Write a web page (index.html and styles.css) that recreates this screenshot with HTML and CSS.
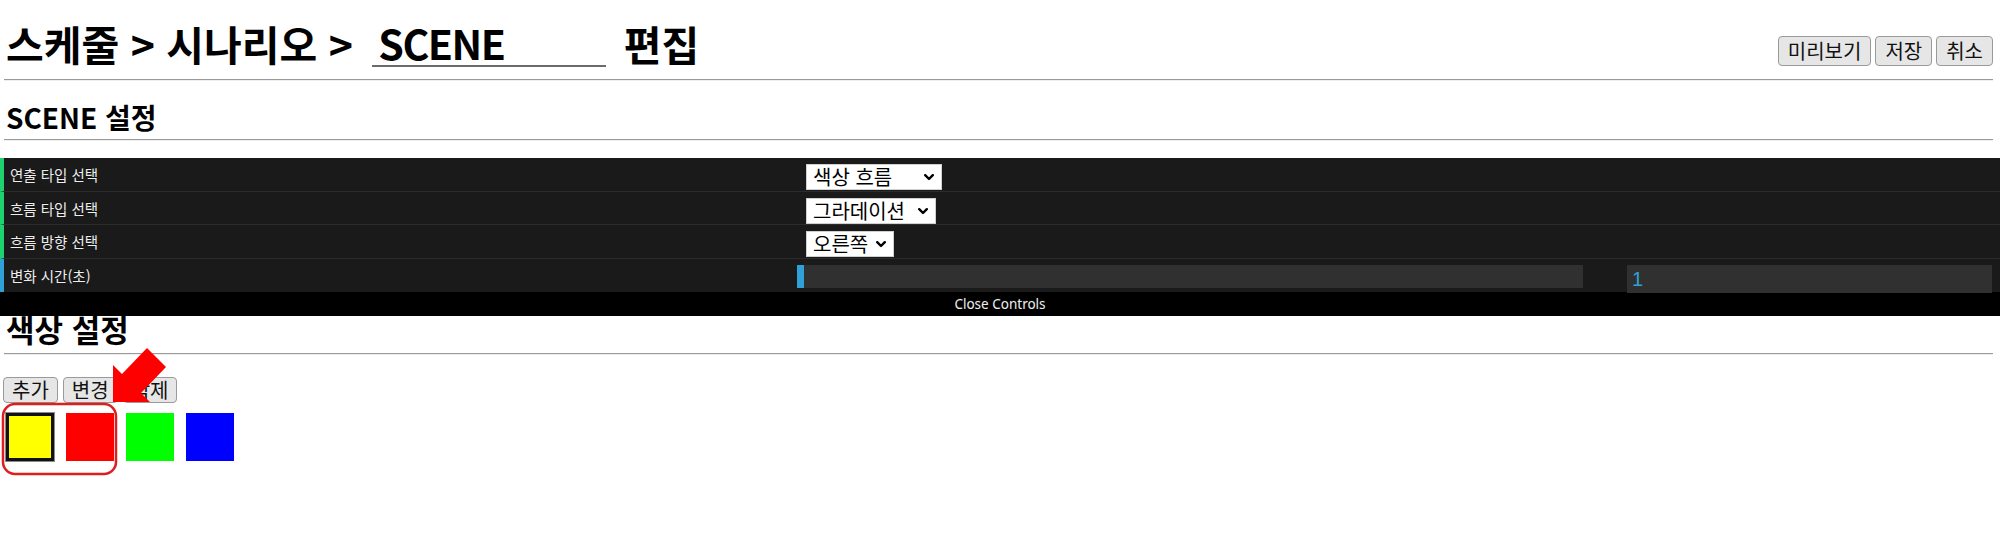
FILE: index.html
```html
<!DOCTYPE html>
<html lang="ko">
<head>
<meta charset="utf-8">
<title>SCENE 편집</title>
<link rel="stylesheet" href="styles.css">
</head>
<body>
<div class="page">
  <header class="topbar">
    <h1 class="title">스케줄 &gt; 시나리오 &gt; <input class="scene-name" type="text" value="SCENE"> 편집</h1>
    <div class="actions">
      <button class="btn">미리보기</button>
      <button class="btn">저장</button>
      <button class="btn">취소</button>
    </div>
  </header>
  <hr class="rule">
  <h2 class="sec-title">SCENE 설정</h2>
  <hr class="rule">

  <div class="gui">
    <ul class="gui-list">
      <li class="cr cr-option">
        <span class="prop">연출 타입 선택</span>
        <div class="ctl">
          <span class="sel w1">
            <select><option>색상 흐름</option><option>단색</option></select>
            <svg viewBox="0 0 10 7"><path d="M1.2 1.2 L5 5 L8.8 1.2"/></svg>
          </span>
        </div>
      </li>
      <li class="cr cr-option">
        <span class="prop">흐름 타입 선택</span>
        <div class="ctl">
          <span class="sel w2">
            <select><option>그라데이션</option><option>단계</option></select>
            <svg viewBox="0 0 10 7"><path d="M1.2 1.2 L5 5 L8.8 1.2"/></svg>
          </span>
        </div>
      </li>
      <li class="cr cr-option">
        <span class="prop">흐름 방향 선택</span>
        <div class="ctl">
          <span class="sel w3">
            <select><option>오른쪽</option><option>왼쪽</option></select>
            <svg viewBox="0 0 10 7"><path d="M1.2 1.2 L5 5 L8.8 1.2"/></svg>
          </span>
        </div>
      </li>
      <li class="cr cr-number">
        <span class="prop">변화 시간(초)</span>
        <div class="ctl">
          <div class="slider"><div class="slider-fg" style="width:7px"></div></div>
          <input class="num" type="text" value="1">
        </div>
      </li>
    </ul>
    <div class="close-btn">Close Controls</div>
  </div>

  <h2 class="sec-title2">색상 설정</h2>
  <hr class="rule">
  <div class="tools">
    <button class="btn sm">추가</button>
    <button class="btn sm">변경</button>
    <button class="btn sm">삭제</button>
  </div>
  <div class="swatches">
    <div class="swatch yellow selected"></div>
    <div class="swatch red"></div>
    <div class="swatch green"></div>
    <div class="swatch blue"></div>
  </div>
</div>

<svg class="annot" viewBox="0 0 2000 547" width="2000" height="547">
  <rect x="3" y="404" width="113" height="70" rx="12" ry="12" class="annot-box"/>
  <polygon class="annot-arrow" points="113,402 113,365 122,374 147,348 166,367 141,393 150,402"/>
</svg>
</body>
</html>
```

FILE: styles.css
```css
* { box-sizing: border-box; }

html, body {
  margin: 0;
  padding: 0;
  background: #fff;
}

body {
  position: relative;
  width: 2000px;
  height: 547px;
  overflow: hidden;
  font-family: "Noto Sans CJK KR", "Noto Sans", sans-serif;
  color: #000;
}

.page {
  padding: 0 7px 0 4px;
}

/* ---------- header ---------- */
.topbar {
  display: flex;
  justify-content: space-between;
  align-items: flex-start;
  height: 79px;
}

.title {
  margin: 0;
  padding: 19px 0 0 2px;
  font-size: 41px;
  line-height: 48px;
  font-weight: 700;
  white-space: nowrap;
}

.scene-name {
  vertical-align: top;
  width: 234px;
  height: 48px;
  margin: 0 6px 0 8px;
  padding: 0 6px;
  border: 0;
  border-bottom: 2px solid #6b6b6b;
  background: transparent;
  color: #000;
  font-family: inherit;
  font-size: 41px;
  font-weight: 700;
  letter-spacing: -1.5px;
  outline: none;
}

.actions {
  display: flex;
  gap: 4px;
  margin-top: 36px;
}

.btn {
  font-family: "Noto Sans CJK KR", "Noto Sans", sans-serif;
  font-size: 20px;
  height: 30px;
  line-height: 26px;
  padding: 0 9px;
  border: 1px solid #9a9a9a;
  border-radius: 4px;
  background: #e6e6e6;
  color: #111;
}

.btn.sm {
  height: 26px;
  line-height: 22px;
  padding: 0 8px;
}

.rule {
  margin: 0;
  height: 0;
  border: 0;
  border-top: 1px solid #9a9a9a;
  border-bottom: 1px solid #eeeeee;
}

.sec-title {
  margin: 19px 0 5px 2px;
  font-size: 28px;
  line-height: 34px;
  font-weight: 700;
  white-space: nowrap;
}

/* ---------- dat.gui style panel ---------- */
.gui {
  position: relative;
  z-index: 1;
  margin: 17px -7px -5px -4px;
  background: #1a1a1a;
  border-top: 1px solid #555;
  font-family: "Noto Sans CJK KR", "Noto Sans", sans-serif;
}

.gui-list {
  list-style: none;
  margin: -1px 0 0;
  padding: 0;
}

.cr {
  display: flex;
  align-items: flex-start;
  height: 33.5px;
  border-left: 4px solid #1ed36f;
  border-bottom: 1px solid #2c2c2c;
  background: #1a1a1a;
}

.cr-number {
  border-left-color: #2fa1d6;
  border-bottom: 0;
}

.prop {
  width: 793px;
  padding-left: 6px;
  font-size: 14.5px;
  line-height: 33px;
  color: #eeeeee;
  text-shadow: 0 -1px 0 #111;
  white-space: nowrap;
}

.ctl {
  flex: 1;
  display: flex;
  align-items: flex-start;
  padding: 6px 8px 0 0;
}

.sel {
  position: relative;
  display: inline-block;
  height: 26px;
  margin-left: 9px;
}

.sel select {
  appearance: none;
  -webkit-appearance: none;
  display: block;
  height: 26px;
  margin: 0;
  padding: 0 20px 0 6px;
  font-family: "Noto Sans CJK KR", "Noto Sans", sans-serif;
  font-size: 20px;
  line-height: 24px;
  color: #000;
  background: #fff;
  border: 1px solid #d0d0d0;
  border-radius: 0;
  outline: none;
}

.w1 select { width: 136px; }
.w2 select { width: 130px; }
.w3 select { width: 88px; }

.sel svg {
  position: absolute;
  right: 8px;
  top: 10px;
  width: 10px;
  height: 7px;
  pointer-events: none;
}

.sel svg path {
  fill: none;
  stroke: #000;
  stroke-width: 2.4;
  stroke-linecap: round;
  stroke-linejoin: round;
}

.slider {
  width: 786px;
  height: 23px;
  background: #303030;
}

.slider-fg {
  height: 100%;
  background: #2fa1d6;
}

.num {
  margin-left: auto;
  width: 365px;
  height: 28px;
  padding: 0 5px;
  border: 0;
  background: #303030;
  color: #2fa1d6;
  font-family: "Liberation Sans", Arial, sans-serif;
  font-size: 20px;
  line-height: 28px;
  outline: none;
}

.close-btn {
  height: 24px;
  line-height: 24px;
  background: #000;
  color: #eeeeee;
  text-align: center;
  font-family: "Noto Sans", sans-serif;
  font-size: 13.5px;
  text-shadow: 0 -1px 0 #111;
}

/* ---------- colour section ---------- */
.sec-title2 {
  margin: 0 0 6px 2px;
  font-size: 31px;
  line-height: 36px;
  font-weight: 700;
}

.tools {
  display: flex;
  gap: 5px;
  margin: 22px 0 0 -1px;
}

.swatches {
  display: flex;
  gap: 12px;
  margin-top: 10px;
  padding-left: 2px;
}

.swatch {
  width: 48px;
  height: 48px;
}

.swatch.selected {
  border: 3px solid #111;
  box-shadow: 0 0 0 1px #8a8a8a;
}

.yellow { background: #ffff00; }
.red { background: #ff0000; }
.green { background: #00ff00; }
.blue { background: #0000ff; }

/* ---------- annotation overlay ---------- */
.annot {
  position: absolute;
  top: 0;
  left: 0;
  pointer-events: none;
  z-index: 2;
}

.annot-box {
  fill: none;
  stroke: #dc1f1f;
  stroke-width: 2.5;
}

.annot-arrow {
  fill: #ff0000;
}
```
